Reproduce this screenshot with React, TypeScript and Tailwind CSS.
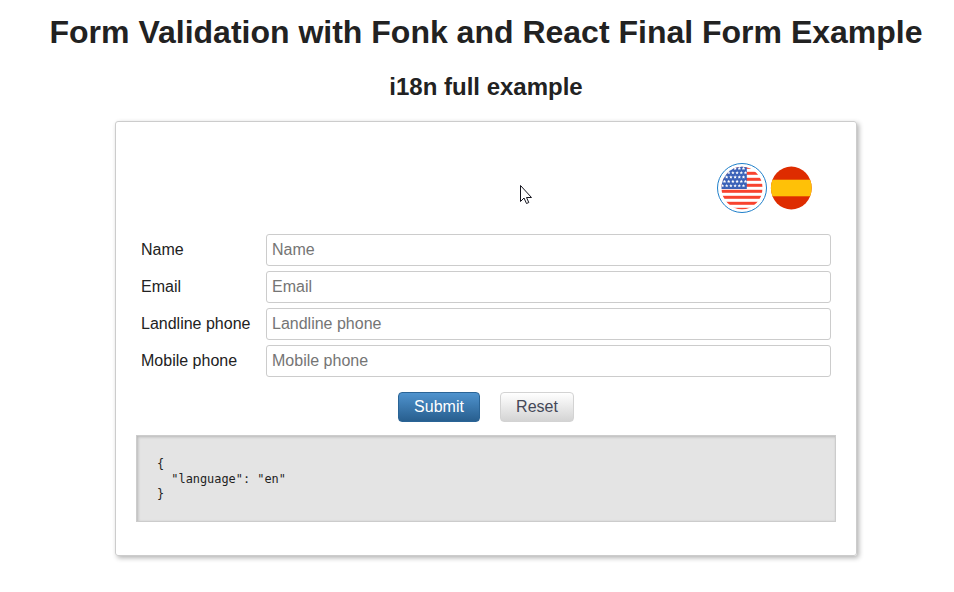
import React from "react";

const fields = ["Name", "Email", "Landline phone", "Mobile phone"];

const stars: [number, number][] = [];
for (let row = 0; row < 5; row++) {
  for (let col = 0; col < 6; col++) {
    stars.push([(row % 2 ? 3.5 : 1.5) + col * 4.2, 2.3 + row * 4.35]);
  }
}

function UsaFlag() {
  return (
    <svg width="42" height="44" viewBox="0 0 42 44">
      <defs>
        <clipPath id="usa">
          <ellipse cx="21" cy="22" rx="20.5" ry="21.3" />
        </clipPath>
      </defs>
      <g clipPath="url(#usa)">
        <rect width="42" height="44" fill="#fff" />
        {[-0.2, 5.8, 11.8, 17.8, 23.8, 29.8, 35.8, 41.8].map((y) => (
          <rect key={y} y={y} width="42" height="3" fill="#f8432f" />
        ))}
        <rect width="25.8" height="23" fill="#3b62b8" />
        {stars.map(([x, y], i) => (
          <path
            key={i}
            d="M0-1.7 .5-.5 1.7-.4 .8 .4 1.1 1.6 0 .9-1.1 1.6-.8 .4-1.7-.4-.5-.5Z"
            transform={`translate(${x} ${y})`}
            fill="#fff"
          />
        ))}
      </g>
    </svg>
  );
}

function SpainFlag() {
  return (
    <svg width="42" height="44" viewBox="0 0 42 44">
      <defs>
        <clipPath id="spain">
          <ellipse cx="21.3" cy="22" rx="20.4" ry="21.5" />
        </clipPath>
      </defs>
      <g clipPath="url(#spain)">
        <rect width="42" height="44" fill="#de2c00" />
        <rect y="13.7" width="42" height="16.6" fill="#ffc107" />
      </g>
    </svg>
  );
}

export default function App() {
  return (
    <div className="relative h-[592px] w-[954px] overflow-hidden bg-white pl-[18px] font-['Liberation_Sans',Arial,sans-serif] text-[#222]">
      <h1 className="pt-[14px] text-center text-[32px] leading-[37px] font-bold whitespace-nowrap">
        Form Validation with Fonk and React Final Form Example
      </h1>
      <h2 className="mt-[22px] text-center text-[24px] leading-[27px] font-bold">i18n full example</h2>

      <form
        className="mx-auto mt-[21px] flex h-[435px] w-[742px] flex-col rounded-[3px] border border-[#ccc] px-5 pt-[41px] shadow-[2px_2px_5px_rgba(0,0,0,0.3)]"
        onSubmit={(e) => e.preventDefault()}
      >
        <div className="flex h-[50px] items-center justify-end gap-[3px] pr-6">
          <button type="button" aria-label="English" className="flex size-[50px] items-center justify-center rounded-full border border-[#1f7fca]">
            <UsaFlag />
          </button>
          <button type="button" aria-label="Español">
            <SpainFlag />
          </button>
        </div>

        <div className="mt-[21px] flex flex-col gap-[5px] px-[5px]">
          {fields.map((name) => (
            <div key={name} className="flex h-8">
              <label className="w-[125px] text-[16px] leading-[31px]">{name}</label>
              <input
                placeholder={name}
                className="h-8 w-[565px] rounded-[3px] border border-[#ccc] px-[5px] pb-px text-[16px] placeholder:text-[#757575]"
              />
            </div>
          ))}
        </div>

        <div className="mt-[15px] flex h-[30px] justify-center gap-5">
          <button
            type="submit"
            className="w-[82px] rounded-[4px] border border-[#2a6496] bg-linear-to-b from-[#4f93ce] to-[#285f8f] pb-px text-[16px] leading-[27px] text-white"
          >
            Submit
          </button>
          <button
            type="button"
            className="w-[74px] rounded-[4px] border border-[#d3d3d3] bg-linear-to-b from-white to-[#d4d4d4] pb-px text-[16px] leading-[27px] text-[#444857]"
          >
            Reset
          </button>
        </div>

        <pre className="mt-[13px] h-[87px] border border-[#ccc] bg-[#e4e4e4] px-5 pt-[21px] font-['DejaVu_Sans_Mono',monospace] text-[11.9px] leading-[15px] shadow-[inset_1px_1px_3px_rgba(0,0,0,0.2)]">
          {JSON.stringify({ language: "en" }, null, 2)}
        </pre>
      </form>

      <svg className="absolute top-[184px] left-[519px]" width="15" height="22" viewBox="0 0 15 22">
        <path d="M1.5 1.5V17.5L5 14L7.5 19.5L9.8 18.5L7.5 13.5H12.5Z" fill="#fff" stroke="#14141e" />
      </svg>
    </div>
  );
}
